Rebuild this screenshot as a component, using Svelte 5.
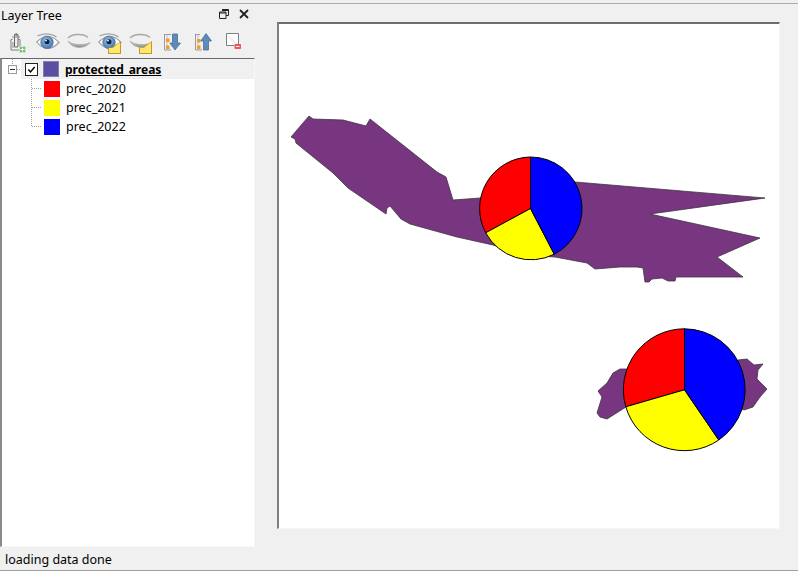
<script lang="ts">
  // pie wedges are computed from the centre and the two outer points read off the map
  type Pie = { cx: number; cy: number; r: number; left: [number, number]; right: [number, number] };

  const pies: Pie[] = [
    { cx: 530.5, cy: 208.5, r: 51.5, left: [485.7, 232.8], right: [554.3, 254.2] },
    { cx: 684.5, cy: 389.8, r: 61, left: [625.8, 406.8], right: [718.8, 440] }
  ];

  const wedges = (p: Pie) => {
    const top = `${p.cx} ${p.cy - p.r}`;
    const arc = `A${p.r} ${p.r} 0 0 1`;
    const start = `M${p.cx} ${p.cy}L`;
    return [
      { fill: '#ff0000', d: `${start}${p.left.join(' ')}${arc} ${top}Z` },
      { fill: '#ffff00', d: `${start}${p.right.join(' ')}${arc} ${p.left.join(' ')}Z` },
      { fill: '#0000ff', d: `${start}${top}${arc} ${p.right.join(' ')}Z` }
    ];
  };

  const areas = [
    '291,137 309,116 313,119 343,120 366,126 370,119 437,172 446,177 453,200 480,198 530,190 575,182 765,198 650,214 760,238 717,257 743,277 676,277 675,281 668,281 662,278 652,279 649,282 645,282 643,268 637,267 620,267 595,269 587,263 555,257 520,255 493,245 457,237 410,224 401,219 390,206 387,208 386,214 348,188 333,173 296,143 295,139',
    '626,369 620,369 613,373 607,383 598,391 602,397 597,413 600,417 607,419 626,407 660,390 700,370',
    '738,360 747,359 754,365 763,364 758,370 757,379 767,389 760,397 753,407 744,410 700,390'
  ];

  const classes = [
    { name: 'prec_2020', color: '#ff0000' },
    { name: 'prec_2021', color: '#ffff00' },
    { name: 'prec_2022', color: '#0000ff' }
  ];
</script>

<svg width="0" height="0" class="defs" aria-hidden="true">
  <defs>
    <radialGradient id="iris" cx="0.45" cy="0.4" r="0.6">
      <stop offset="0" stop-color="#a6c8ee" />
      <stop offset="1" stop-color="#3f73ad" />
    </radialGradient>
    <linearGradient id="lid" x1="0" y1="0" x2="0" y2="1">
      <stop offset="0" stop-color="#e4e4e4" />
      <stop offset="1" stop-color="#8a8a8a" />
    </linearGradient>
    <symbol id="eye-open" viewBox="0 0 24 18">
      <path d="M.800 9C4 5.500 8 3.500 12 3.500C16 3.500 20 6 23 9.500C19.500 13 15.500 15.500 11.500 15.500C7.500 15.500 3.500 12.500 .800 9Z" fill="#fff" stroke="#9a9fa6" stroke-width="1.200" />
      <circle cx="11" cy="9.300" r="6.300" fill="url(#iris)" stroke="#4a6f99" stroke-width="0.600" />
      <circle cx="11" cy="8.800" r="2.500" fill="#10233c" />
      <circle cx="10" cy="7.600" r="0.900" fill="#fff" />
      <path d="M1.500 2.800C8 .200 15 .200 20.500 3.800" fill="none" stroke="#a8a8a8" stroke-width="1.400" />
    </symbol>
    <symbol id="eye-closed" viewBox="0 0 24 18">
      <path d="M1 5C5 1 16 0 21 4.500" fill="none" stroke="#a8a8a8" stroke-width="1.400" />
      <path d="M1 8C5 12 17 13 23 9.500C19 15.500 6 17 1 8Z" fill="url(#lid)" stroke="#a0a0a0" stroke-width="0.700" />
    </symbol>
  </defs>
</svg>

<div class="window">
  <div class="body">
    <aside class="panel">
      <header class="title">
        <span>Layer Tree</span>
        <div class="title-icons">
          <svg width="10" height="10" viewBox="0 0 10 10" aria-hidden="true">
            <path d="M3 .5h6.500v6H7M.500 3h6.500v6.500H.500z M3 1.500h6.500M.500 4h6.500" fill="none" stroke="#222" />
          </svg>
          <svg width="10" height="10" viewBox="0 0 10 10" aria-hidden="true">
            <path d="M1 1l8 8M9 1l-8 8" fill="none" stroke="#222" stroke-width="1.800" />
          </svg>
        </div>
      </header>

      <div class="toolbar">
        <button aria-label="add layer">
          <svg width="24" height="24" viewBox="0 0 24 24">
            <path d="M7.500 9.500L6 9.500V20H15V9.500L13.500 9.500" fill="#f4f4f4" stroke="#7d7d7d" />
            <path d="M9.500 4.500H13V17H9.500Z" fill="#eee" stroke="#666" />
            <path d="M10.500 3H12V6H10.500Z" fill="#888" />
            <path d="M8 12V18M7 7h8" fill="none" stroke="#888" />
            <rect x="14.500" y="16.500" width="6" height="6" fill="#6fbf73" stroke="#c9e4c9" />
            <path d="M17.500 17.500v4M15.500 19.500h4" stroke="#fff" />
          </svg>
        </button>
        <button aria-label="show all"><svg width="24" height="18"><use href="#eye-open" /></svg></button>
        <button aria-label="hide all"><svg width="24" height="18"><use href="#eye-closed" /></svg></button>
        <button aria-label="show selected" class="noted">
          <svg width="24" height="18"><use href="#eye-open" /></svg>
          <span class="note"></span>
        </button>
        <button aria-label="hide selected" class="noted">
          <svg width="24" height="18"><use href="#eye-closed" /></svg>
          <span class="note"></span>
        </button>
        <button aria-label="expand all">
          <svg width="24" height="24" viewBox="0 0 24 24">
            <path d="M4.500 4.500V20M4 4.500H11M4.500 20H11" fill="none" stroke="#9a9a9a" />
            <path d="M7 4.500V20" fill="none" stroke="#c4c4c4" />
            <rect x="6" y="8.500" width="3.500" height="3.500" fill="#f59a23" />
            <rect x="6" y="15.500" width="3.500" height="3.500" fill="#f59a23" />
            <path d="M12.500 4H17.500V13H20.500L15 20L9.800 13H12.500Z" fill="#5d8cb8" stroke="#3c668e" stroke-width="0.700" />
          </svg>
        </button>
        <button aria-label="collapse all">
          <svg width="24" height="24" viewBox="0 0 24 24">
            <path d="M4.500 4.500V20M4 4.500H9M4.500 20H11" fill="none" stroke="#9a9a9a" />
            <path d="M7 4.500V20" fill="none" stroke="#c4c4c4" />
            <rect x="6" y="9" width="3.500" height="3.500" fill="#f59a23" />
            <rect x="6" y="15.500" width="3.500" height="3.500" fill="#f59a23" />
            <path d="M12.500 20H17.500V11H20.500L15 3.500L9.800 11H12.500Z" fill="#5d8cb8" stroke="#3c668e" stroke-width="0.700" />
          </svg>
        </button>
        <button aria-label="remove layer">
          <svg width="24" height="24" viewBox="0 0 24 24">
            <path d="M4.500 3.500H16.500V14M12 15.500H4.500V3.500" fill="#fff" stroke="#7f7f7f" />
            <rect x="12.500" y="14" width="6.500" height="5" rx="0.800" fill="#f2545b" />
            <path d="M14 16.500h3.500" stroke="#fff" />
          </svg>
        </button>
      </div>

      <div class="tree">
        <svg class="guides" width="50" height="80" aria-hidden="true">
          <path d="M12.500 0V6M17 10.500H21M31.500 20V67.500M32 29.500H42M32 48.500H42M32 67.500H42" fill="none" stroke="#a0a0a0" stroke-dasharray="1 1" />
          <rect x="8.500" y="6.500" width="8" height="8" fill="#fff" stroke="#9a9a9a" />
          <path d="M10 10.500h5" stroke="#333" />
        </svg>
        <div class="row layer">
          <span class="check">
            <svg width="13" height="13" viewBox="0 0 13 13" aria-hidden="true">
              <path d="M2.800 6.500L5.300 9.300L10.200 3.500" fill="none" stroke="#000" stroke-width="1.700" />
            </svg>
          </span>
          <span class="swatch layer-swatch"></span>
          <span class="layer-name">protected_areas</span>
        </div>
        {#each classes as c}
          <div class="row">
            <span class="swatch" style="background: {c.color}"></span>
            <span>{c.name}</span>
          </div>
        {/each}
      </div>
    </aside>

    <main class="canvas">
      <svg width="500" height="504" viewBox="279 24 500 504">
        {#each areas as points}
          <polygon {points} fill="#77367f" stroke="#3d3340" stroke-width="0.800" />
        {/each}
        {#each pies as pie}
          {#each wedges(pie) as w}
            <path d={w.d} fill={w.fill} stroke="#000" stroke-width="1" stroke-linejoin="round" />
          {/each}
        {/each}
      </svg>
    </main>
  </div>
  <footer class="status">loading data done</footer>
</div>

<style>
  :global(body) {
    background: #f0f0f0;
  }

  .defs {
    position: absolute;
  }

  .window {
    width: 798px;
    height: 571px;
    box-sizing: border-box;
    display: flex;
    flex-direction: column;
    padding-top: 3px;
    background: #f0f0f0;
    border-bottom: 1px solid #a0a0a0;
    font-family: "Noto Sans", "Open Sans", sans-serif;
    font-size: 12.500px;
    color: #000;
    overflow: hidden;
  }

  .body {
    flex: 1;
    display: flex;
    min-height: 0;
    border-top: 1px solid #ababab;
  }

  .panel {
    width: 255px;
    display: flex;
    flex-direction: column;
  }

  .title {
    height: 23px;
    padding: 0 6px 0 1px;
    display: flex;
    align-items: center;
    justify-content: space-between;
  }

  .title-icons {
    display: flex;
    gap: 10px;
    margin-top: -3px;
  }

  .toolbar {
    height: 31px;
    padding-left: 1px;
    display: flex;
    align-items: center;
  }

  .toolbar button {
    position: relative;
    width: 31px;
    height: 26px;
    margin-top: -1px;
    padding: 0;
    border: 0;
    background: none;
    display: flex;
    align-items: center;
    justify-content: center;
  }

  .note {
    position: absolute;
    right: 4px;
    bottom: 1px;
    width: 13px;
    height: 13px;
    background: #c39a1a;
    clip-path: polygon(100% 0, 100% 100%, 0 100%, 0 50%, 30% 50%);
  }

  .note::after {
    content: "";
    position: absolute;
    inset: 1px;
    background: #ffe66e;
    clip-path: polygon(100% 3%, 100% 100%, 0 100%, 0 54%, 34% 54%);
  }

  .tree {
    position: relative;
    flex: 1;
    margin-bottom: 1px;
    background: #fff;
    border-top: 1px solid #696969;
    border-left: 2px solid #8a8a8a;
    border-right: 1px solid #f7f7f7;
    border-bottom: 1px solid #f7f7f7;
  }

  .guides {
    position: absolute;
    left: -2px;
    top: 0;
  }

  .row {
    height: 19px;
    padding-left: 42px;
    display: flex;
    align-items: center;
    gap: 6px;
  }

  .layer {
    height: 20px;
    margin-left: 19px;
    padding-left: 4px;
    background: #f0f0f0;
    gap: 5px;
  }

  .check {
    width: 11px;
    height: 11px;
    border: 1px solid #222;
    background: #fff;
    display: flex;
    align-items: center;
    justify-content: center;
  }

  .swatch {
    width: 16px;
    height: 16px;
  }

  .layer-swatch {
    background: #5a4fa0;
    border: 1px solid #8080b0;
    box-sizing: border-box;
  }

  .layer-name {
    margin-left: 1px;
    font-size: 12px;
    font-weight: 700;
    text-decoration: underline;
  }

  .canvas {
    margin: 18px 18px 0 22px;
    width: 500px;
    height: 504px;
    background: #fff;
    border-top: 2px solid #6e6e6e;
    border-left: 2px solid #7f7f7f;
    border-right: 1px solid #f7f7f7;
    border-bottom: 1px solid #f7f7f7;
  }

  .canvas svg {
    display: block;
  }

  .status {
    height: 22px;
    padding-left: 5px;
    display: flex;
    align-items: center;
  }
</style>
